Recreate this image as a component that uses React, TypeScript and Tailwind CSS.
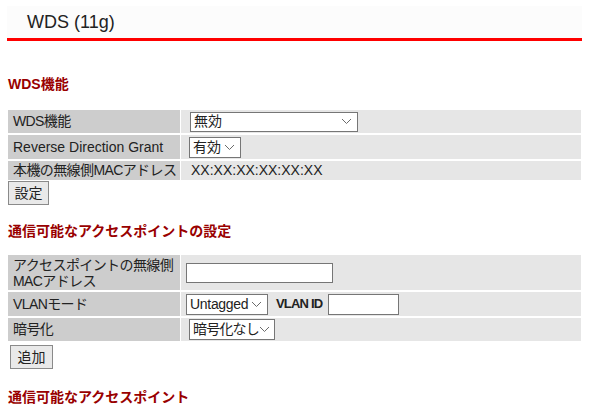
import { FC, ReactNode } from "react";

const font = { fontFamily: '"Liberation Sans", Arial, "Noto Sans CJK JP", sans-serif' };

const Chevron: FC = () => (
  <svg width="11" height="7" viewBox="0 0 11 7" className="shrink-0">
    <polyline points="1,1 5.5,5.5 10,1" fill="none" stroke="#6b6b6b" strokeWidth="1" />
  </svg>
);

const Select: FC<{ label: string; className: string; textCls?: string }> = ({ label, className, textCls }) => (
  <div
    className={`flex items-center justify-between bg-white border border-[#767676] pl-[3px] pr-[5px] text-[14px] text-[#222] whitespace-nowrap ${className}`}
  >
    <span className={textCls ?? ""}>{label}</span>
    <Chevron />
  </div>
);

const Row: FC<{ label: ReactNode; h: string; children: ReactNode; pad?: string }> = ({ label, h, children, pad }) => (
  <>
    <div
      className={`bg-[#cdcdcd] pl-[5px] flex items-center text-[14px] text-[#222] whitespace-nowrap tracking-[-0.6px] ${h}`}
    >
      {label}
    </div>
    <div className={`bg-[#e6e6e6] flex items-center ${pad ?? "pl-[8px]"} ${h}`}>{children}</div>
  </>
);

const Heading: FC<{ children: ReactNode; className: string }> = ({ children, className }) => (
  <h2 className={`ml-[8px] text-[14px] leading-[20px] font-bold text-[#990000] ${className}`}>{children}</h2>
);

const Button: FC<{ label: string; className: string }> = ({ label, className }) => (
  <button className={`h-[24px] bg-[#e9e9e9] border border-[#8a8a8a] text-[14px] text-[#222] ${className}`}>
    {label}
  </button>
);

const App: FC = () => {
  return (
    <div className="w-[589px] h-[415px] bg-white overflow-hidden" style={font}>
      <div className="mt-[6px] mx-[7px] h-[35px] bg-[#fcfcfc] border-b-[3px] border-[#ff0000] flex items-center pl-[20px]">
        <span className="text-[18px] text-[#222]">WDS (11g)</span>
      </div>

      <Heading className="mt-[33px]">WDS機能</Heading>

      <div className="mx-[8px] mt-[16px] grid grid-cols-[172px_1fr] gap-x-px gap-y-[2px]">
        <Row label="WDS機能" h="h-[23px]" pad="pl-[9px]">
          <Select label="無効" className="w-[168px] h-[20px]" />
        </Row>
        <Row label={<span className="tracking-normal">Reverse Direction Grant</span>} h="h-[24px]">
          <Select label="有効" className="w-[52px] h-[21px]" />
        </Row>
        <Row label="本機の無線側MACアドレス" h="h-[19px]" pad="pl-[10px]">
          <span className="text-[14px] text-[#222]">XX:XX:XX:XX:XX:XX</span>
        </Row>
      </div>
      <Button label="設定" className="ml-[8px] mt-px w-[41px]" />

      <Heading className="mt-[16px]">通信可能なアクセスポイントの設定</Heading>

      <div className="mx-[8px] mt-[14px] grid grid-cols-[172px_1fr] gap-x-px gap-y-[2px]">
        <Row
          label={
            <span className="leading-[16px]">
              アクセスポイントの無線側
              <br />
              MACアドレス
            </span>
          }
          h="h-[35px]"
          pad="pl-[5px]"
        >
          <div className="w-[147px] h-[20px] bg-white border border-[#767676]" />
        </Row>
        <Row label="VLANモード" h="h-[24px]" pad="pl-[5px]">
          <Select label="Untagged" className="w-[82px] h-[21px]" textCls="tracking-[-0.3px]" />
          <span className="ml-[8px] w-[42px] text-[13px] font-bold text-[#222] tracking-[-0.8px] whitespace-nowrap">
            VLAN ID
          </span>
          <div className="ml-[10px] w-[71px] h-[21px] bg-white border border-[#767676]" />
        </Row>
        <Row label="暗号化" h="h-[23px]">
          <Select label="暗号化なし" className="w-[86px] h-[21px]" textCls="tracking-[-0.8px]" />
        </Row>
      </div>
      <Button label="追加" className="ml-[10px] mt-[4px] w-[43px]" />

      <Heading className="mt-[18px]">通信可能なアクセスポイント</Heading>
    </div>
  );
};

export default App;
